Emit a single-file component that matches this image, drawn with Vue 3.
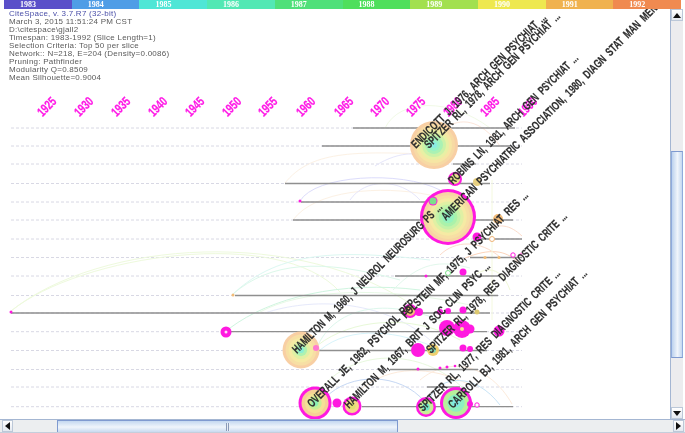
<script setup>
const slices = [
  ['1983', '#5a4fc9'], ['1984', '#4f9de6'], ['1985', '#4fe6d6'], ['1986', '#52e8b4'], ['1987', '#4fe07a'],
  ['1988', '#4fdf5c'], ['1989', '#a2e04f'], ['1990', '#eee84f'], ['1991', '#f0b24f'], ['1992', '#f08a50'],
]
const info = [
  'CiteSpace, v. 3.7.R7 (32-bit)',
  'March 3, 2015 11:51:24 PM CST',
  'D:\\citespace\\gjall2',
  'Timespan: 1983-1992 (Slice Length=1)',
  'Selection Criteria: Top 50 per slice',
  'Network:: N=218, E=204 (Density=0.0086)',
  'Pruning: Pathfinder',
  'Modularity Q=0.8509',
  'Mean Silhouette=0.9004',
]
const years = [
  [1925, 47], [1930, 84], [1935, 121], [1940, 158], [1945, 195], [1950, 232], [1955, 268],
  [1960, 306], [1965, 344], [1970, 380], [1975, 416], [1980, 453], [1985, 490], [1990, 528],
]
const rows = [
  [128, 353, 515], [146, 322, 510], [164, 453, 476], [183.5, 285, 490], [202, 301, 460], [220, 293, 513],
  [239, 480, 522], [257.5, 470, 522], [276, 395, 498], [295.5, 235, 498], [313, 11, 490], [331.7, 226, 487],
  [350.5, 315, 487], [369.5, 390, 478], [387, 427, 460], [406.7, 362, 513],
]
const arcs = [
  ['M11 311C100 240 300 225 420 310', '#eefadd'],
  ['M11 311C80 255 280 225 340 292', '#eefadd'],
  ['M233 294C280 250 340 250 430 260', '#dcf8f2'],
  ['M233 294C270 262 320 258 400 280', '#dcf8ea'],
  ['M285 183C310 152 350 150 440 155', '#fcf1e4'],
  ['M300 201C315 175 400 170 440 190', '#dcdcfb'],
  ['M293 220C315 190 380 185 430 195', '#fcf1e4'],
  ['M350 200C365 178 400 178 420 200', '#e6e6fb'],
  ['M375 166C400 150 425 150 440 165', '#e6e6fb'],
  ['M385 128C400 98 450 98 490 128', '#f1fae6'],
  ['M445 128C460 118 480 118 500 146', '#fde6da'],
  ['M230 328C270 298 340 280 420 290', '#cff5e0'],
  ['M260 312C300 290 380 285 470 305', '#e8f9e6'],
  ['M265 313C310 298 380 298 430 340', '#e6e9fb'],
  ['M318 345C340 300 400 300 450 325', '#ddf7ec'],
  ['M318 345C350 320 410 312 460 340', '#e8f9d8'],
  ['M320 350C350 325 400 330 440 350', '#d8f4fb'],
  ['M320 390C350 350 420 345 465 390', '#e8f9de'],
  ['M325 398C350 372 400 372 425 402', '#c6d8f4'],
  ['M360 390C390 365 430 365 470 385', '#fdebdb'],
  ['M430 398C440 375 475 372 500 405', '#c8e4f6'],
  ['M420 380C450 355 490 365 512 404', '#fdebdb'],
  ['M440 255C455 240 480 240 500 257', '#fcdccb'],
  ['M480 232C500 222 510 225 522 236', '#fcdccb'],
  ['M465 258C490 248 505 250 518 262', '#fcd4bb'],
  ['M470 280C480 268 500 262 510 290', '#f0f8d6'],
  ['M393 290C420 262 440 260 470 268', '#e2f8ec'],
  ['M492 180V320', '#f4f9de'],
]
const nodes = [
  { x: 434, y: 145, r: 24, rings: ['#f8cfa4', '#f7daa4', '#f6e6a4', '#e8f0a4', '#ccf2a8', '#aaf2b4', '#96f2c8', '#8aece4'] },
  { x: 448, y: 217, r: 28, ring: 3, rings: ['#f8d4a4', '#f7dfa4', '#f6eaa4', '#e0f0a4', '#c4f2a8', '#aaf2aa', '#96f2bc', '#8aecc8'] },
  { x: 301, y: 350, r: 18.5, rings: ['#f8cfa4', '#f7dfa4', '#f6eaa4', '#e0f0a4', '#aef2b0', '#8aeed4'] },
  { x: 315, y: 403, r: 16.5, ring: 3, rings: ['#f7d096', '#f5e196', '#c8ef96', '#8ef0b4'] },
  { x: 456, y: 403, r: 16, ring: 3, rings: ['#b8f09a', '#8ef0c0', '#80e8e0'] },
  { x: 426, y: 407, r: 10, ring: 2.5, rings: ['#c8ef96', '#70e8c8'] },
  { x: 352, y: 406, r: 9.5, ring: 2.5, rings: ['#f5d88a', '#e0e070'] },
  { x: 455, y: 179, r: 7, ring: 2, rings: ['#e6e48a'] },
  { x: 433, y: 201, r: 4.5, ring: 1, rings: ['#7de08a'] },
  { x: 477, y: 182, r: 4, rings: ['#e8d080'] },
  { x: 498, y: 219, r: 5, rings: ['#f3bc78'] },
  { x: 477, y: 237, r: 4.5, fill: '#ff19e0' },
  { x: 492, y: 239, r: 2.5, hollow: '#eeb478' },
  { x: 485, y: 257.5, r: 1.5, fill: '#f3bc78' },
  { x: 499, y: 257.5, r: 1.5, fill: '#f3bc78' },
  { x: 513, y: 255, r: 2.2, hollow: '#ff19e0' },
  { x: 521, y: 254, r: 1.5, fill: '#ff90e0' },
  { x: 463, y: 272, r: 3.5, fill: '#ff19e0' },
  { x: 448, y: 273, r: 2.5, hollow: '#7de08a' },
  { x: 426, y: 276, r: 1.5, fill: '#ff19e0' },
  { x: 419, y: 312, r: 4, fill: '#ff19e0' },
  { x: 410, y: 311, r: 7, ring: 2, rings: ['#f3bc78'] },
  { x: 440, y: 312, r: 3, fill: '#ff19e0' },
  { x: 448, y: 311, r: 3, fill: '#ff19e0' },
  { x: 463, y: 310, r: 3.5, fill: '#ff19e0' },
  { x: 477, y: 312, r: 2.5, fill: '#dcc870' },
  { x: 447, y: 328, r: 8, fill: '#ff19e0' },
  { x: 462, y: 329, r: 9, fill: '#ff19e0' },
  { x: 470, y: 329, r: 4.5, fill: '#ff19e0' },
  { x: 499, y: 331, r: 5.5, fill: '#ff19e0' },
  { x: 448, y: 329, r: 1.5, fill: '#f5e196' },
  { x: 462, y: 329, r: 2, fill: '#f5e196' },
  { x: 418, y: 350, r: 7, fill: '#ff19e0' },
  { x: 433, y: 350, r: 6, rings: ['#efd070', '#80d8b0'] },
  { x: 463, y: 348, r: 3.5, fill: '#ff19e0' },
  { x: 470, y: 349, r: 3, fill: '#ff19e0' },
  { x: 418, y: 369, r: 1.5, fill: '#ff19e0' },
  { x: 440, y: 368, r: 1.5, fill: '#ff19e0' },
  { x: 447, y: 367, r: 1.5, fill: '#ff19e0' },
  { x: 455, y: 366, r: 1.3, fill: '#ff19e0' },
  { x: 337, y: 403, r: 4.5, fill: '#ff19e0' },
  { x: 470, y: 404, r: 3, fill: '#ff19e0' },
  { x: 477, y: 405, r: 2.2, hollow: '#ff19e0' },
  { x: 316, y: 348, r: 3, fill: '#ff7ad0' },
  { x: 226, y: 332, r: 5.5, ring: 4, rings: ['#fbe0f4'] },
  { x: 233, y: 295, r: 1.5, fill: '#f3bc78' },
  { x: 11, y: 312, r: 1.5, fill: '#ff19e0' },
  { x: 300, y: 201, r: 1.5, fill: '#ff19e0' },
]
const labels = [
  ['ENDICOTT J, 1976, ARCH GEN PSYCHIAT ...', 416, 149, 131],
  ['SPITZER RL, 1978, ARCH GEN PSYCHIAT ...', 429, 149, 132],
  ['ROBINS LN, 1981, ARCH GEN PSYCHIAT ...', 453, 185, 126],
  ['AMERICAN PSYCHIATRIC ASSOCIATION, 1980, DIAGN STAT MAN MEN', 446, 221, 212],
  ['HAMILTON M, 1960, J NEUROL NEUROSURG PS ...', 297, 354, 146],
  ['FOLSTEIN MF, 1975, J PSYCHIAT RES ...', 406, 319, 123],
  ['OVERALL JE, 1962, PSYCHOL REP', 312, 408, 104],
  ['HAMILTON M, 1967, BRIT J SOC CLIN PSYC ...', 349, 409, 142],
  ['SPITZER RL, 1978, RES DIAGNOSTIC CRITE ...', 431, 354, 137],
  ['SPITZER RL, 1977, RES DIAGNOSTIC CRITE ...', 423, 412, 138],
  ['CARROLL BJ, 1981, ARCH GEN PSYCHIAT ...', 453, 409, 135],
]
function ringR(n, i) {
  const count = n.rings.length
  const outer = n.r - (n.ring || 0)
  return (outer * (count - i)) / count
}
</script>

<template>
  <div class="app">
    <div class="timebar">
      <div v-for="s in slices" :key="s[0]" class="slice" :style="{ background: s[1] }">{{ s[0] }}</div>
    </div>
    <div class="middle">
      <div class="canvas">
        <div class="info">
          <div v-for="(t, i) in info" :key="t" :class="{ first: i === 0 }">{{ t }}</div>
        </div>
        <svg class="plot" width="670" height="410" viewBox="0 9 670 410">
          <g v-for="r in rows" :key="r[0]">
            <line x1="11" x2="522" :y1="r[0]" :y2="r[0]" class="dash" />
          </g>
          <path v-for="(a, i) in arcs" :key="i" :d="a[0]" fill="none" :stroke="a[1]" stroke-width="1" />
          <g v-for="r in rows" :key="'s' + r[0]">
            <line :x1="r[1]" :x2="r[2]" :y1="r[0]" :y2="r[0]" class="solid" />
          </g>
          <text v-for="y in years" :key="y[0]" class="year" text-anchor="middle" textLength="21" lengthAdjust="spacingAndGlyphs"
            :transform="`translate(${y[1]} 107) rotate(-45)`" x="0" y="4">{{ y[0] }}</text>
          <g v-for="(n, i) in nodes" :key="i">
            <circle v-if="n.fill" :cx="n.x" :cy="n.y" :r="n.r" :fill="n.fill" />
            <circle v-else-if="n.hollow" :cx="n.x" :cy="n.y" :r="n.r" fill="#fff" :stroke="n.hollow" stroke-width="1" />
            <template v-else>
              <circle v-if="n.ring" :cx="n.x" :cy="n.y" :r="n.r" fill="#ff19e0" />
              <circle v-for="(c, j) in n.rings" :key="j" :cx="n.x" :cy="n.y" :r="ringR(n, j)" :fill="c" />
            </template>
          </g>
          <text v-for="l in labels" :key="l[0]" class="label" :textLength="l[3] * 1.414" lengthAdjust="spacingAndGlyphs"
            :transform="`translate(${l[1]} ${l[2]}) rotate(-45)`">{{ l[0] }}</text>
        </svg>
      </div>
      <div class="vscroll">
        <div class="btn"><svg width="8" height="5" viewBox="0 0 8 5"><path d="M4 0 8 5H0Z" fill="#111" /></svg></div>
        <div class="vtrack"><div class="vthumb"></div></div>
        <div class="btn"><svg width="8" height="5" viewBox="0 0 8 5"><path d="M0 0H8L4 5Z" fill="#111" /></svg></div>
      </div>
    </div>
    <div class="hscroll">
      <div class="btn hbtn"><svg width="5" height="8" viewBox="0 0 5 8"><path d="M5 0V8L0 4Z" fill="#111" /></svg></div>
      <div class="htrack">
        <div class="hthumb"><span class="grip"></span></div>
      </div>
      <div class="btn hbtn"><svg width="5" height="8" viewBox="0 0 5 8"><path d="M0 0V8L5 4Z" fill="#111" /></svg></div>
    </div>
  </div>
</template>

<style scoped>
.app {
  width: 685px;
  height: 433px;
  background: #fff;
  overflow: hidden;
  display: flex;
  flex-direction: column;
  filter: blur(0.35px);
}
.timebar {
  display: flex;
  height: 9px;
  margin: 0 4px;
  flex: none;
}
.slice {
  flex: 1;
  color: #fff;
  font: bold 8px/9px "Liberation Serif", serif;
  padding-left: 16px;
  box-sizing: border-box;
}
.middle {
  flex: 1;
  display: flex;
  min-height: 0;
  padding-right: 2px;
}
.canvas {
  position: relative;
  flex: 1;
  min-width: 0;
  overflow: hidden;
}
.plot {
  display: block;
}
.info {
  position: absolute;
  left: 9px;
  top: 1px;
  font: 8px/8px "Liberation Sans", sans-serif;
  letter-spacing: 0.24px;
  color: #5a5a5a;
  white-space: nowrap;
  z-index: 1;
}
.info .first {
  color: #4a4fa8;
}
.dash {
  stroke: #d8d8e4;
  stroke-width: 1;
  stroke-dasharray: 3 2;
}
.solid {
  stroke: #8f8f8f;
  stroke-width: 1.3;
}
.year {
  fill: #ff19e6;
  font: bold 13px "Liberation Sans", sans-serif;
  stroke: #ff19e6;
  stroke-width: 0.25px;
}
.label {
  fill: #2e2e2e;
  font: bold 12px "Liberation Sans", sans-serif;
  word-spacing: 3px;
  stroke: #2e2e2e;
  stroke-width: 0.2px;
}
.vscroll {
  width: 13px;
  flex: none;
  display: flex;
  flex-direction: column;
  border-left: 1px solid #a4b6d2;
  box-sizing: border-box;
  background: #ececee;
}
.btn {
  height: 12px;
  flex: none;
  display: flex;
  align-items: center;
  justify-content: center;
  background: linear-gradient(#fff, #e4e9f0);
  border: 1px solid #bcc8d8;
  box-sizing: border-box;
}
.vtrack {
  flex: 1;
  padding-top: 130px;
  padding-bottom: 49px;
  display: flex;
  box-sizing: border-box;
}
.vthumb {
  flex: 1;
  background: linear-gradient(90deg, #bcd2ee, #f0f5fb 55%, #c4d8f0);
  border-left: 1px solid #8fabdc;
  border-right: 1px solid #8fabdc;
  border-top: 1px solid #7f9ad0;
  border-bottom: 1px solid #7f9ad0;
}
.hscroll {
  height: 14px;
  flex: none;
  display: flex;
  background: #eceef0;
  border-top: 1px solid #a4b6d2;
  border-bottom: 1px solid #c4cedc;
  box-sizing: border-box;
  padding: 0 1px 0 2px;
}
.hbtn {
  width: 11px;
  height: auto;
}
.htrack {
  flex: 1;
  padding-left: 44px;
  padding-right: 275px;
  display: flex;
}
.hthumb {
  flex: 1;
  background: linear-gradient(#c4d8f0, #f0f5fb 55%, #c8daf0);
  border-left: 1px solid #7f9ad0;
  border-right: 1px solid #7f9ad0;
  border-top: 1px solid #7f9ad0;
  display: flex;
  align-items: center;
  justify-content: center;
}
.grip {
  width: 4px;
  height: 8px;
  background: repeating-linear-gradient(90deg, #8a9ab8 0 1px, #e8eef6 1px 2px);
}
</style>
